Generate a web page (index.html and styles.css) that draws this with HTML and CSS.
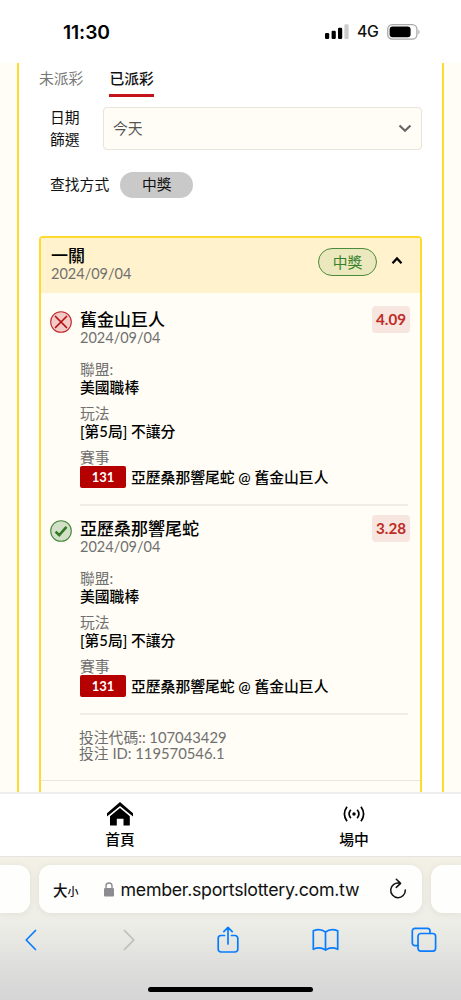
FILE: index.html
```html
<!DOCTYPE html>
<html lang="zh-Hant">
<head>
<meta charset="utf-8">
<title>已派彩</title>
<link rel="stylesheet" href="styles.css">
</head>
<body>
<div class="screen">
  <header class="status">
    <span class="time">11:30</span>
    <div class="indicators">
      <svg width="25" height="16" viewBox="0 0 25 16"><rect x="0" y="9" width="4.2" height="6" rx="1.2"/><rect x="6.6" y="6.7" width="4.2" height="8.3" rx="1.2"/><rect x="13" y="3.7" width="4.2" height="11.3" rx="1.2"/><rect x="19.4" y="0.3" width="4.2" height="14.7" rx="1.2" fill="#ccc"/></svg>
      <span class="network">4G</span>
      <svg width="34" height="16" viewBox="0 0 34 16"><rect x=".7" y=".7" width="29.2" height="14.4" rx="4.6" fill="none" stroke="#a9a9a9" stroke-width="1.3"/><rect x="2.6" y="2.6" width="21" height="10.6" rx="3"/><path d="M31.4 5.4q2.4 2.5 0 5z" fill="#a9a9a9"/></svg>
    </div>
  </header>

  <main class="page">
    <div class="column">
      <nav class="tabs">
        <span class="tab">未派彩</span>
        <span class="tab tab-active">已派彩</span>
      </nav>
      <div class="date-filter">
        <span class="date-label">日期<br>篩選</span>
        <div class="select"><span>今天</span><svg width="14" height="9" viewBox="0 0 14 9"><path d="M1.5 1.5 7 6.7l5.500-5.200" fill="none" stroke="#666" stroke-width="2.200"/></svg></div>
      </div>
      <div class="search-row"><span>查找方式</span><span class="chip">中獎</span></div>

      <section class="card">
        <header class="card-head">
          <div><div class="title">一關</div><div class="date">2024/09/04</div></div>
          <span class="win">中獎</span>
          <svg class="caret" width="12" height="9" viewBox="0 0 12 9"><path d="M1.500 7.200 6 2.400l4.500 4.800" fill="none" stroke="#000" stroke-width="2.300"/></svg>
        </header>

        <article class="leg">
          <svg class="mark" width="22" height="22" viewBox="0 0 22 22"><circle cx="11" cy="11" r="10.300" fill="#f2cbc6" stroke="#c1272d" stroke-width="1.100"/><path d="m5.500 5.500 11 11m0-11-11 11" stroke="#b80d12" stroke-width="1.700" stroke-linecap="round"/></svg>
          <div class="leg-body">
            <div class="leg-head">
              <div><div class="title">舊金山巨人</div><div class="date">2024/09/04</div></div>
              <span class="odds">4.09</span>
            </div>
            <dl class="facts">
              <dt>聯盟:</dt><dd>美國職棒</dd>
              <dt>玩法</dt><dd>[第5局] 不讓分</dd>
              <dt>賽事</dt><dd class="match"><span class="code">131</span>亞歷桑那響尾蛇 @ 舊金山巨人</dd>
            </dl>
          </div>
        </article>

        <article class="leg">
          <svg class="mark" width="22" height="22" viewBox="0 0 22 22"><circle cx="11" cy="11" r="10.300" fill="#d3e0c8" stroke="#46873b" stroke-width="1.100"/><path d="m5.600 11.600 3.600 3.500 7.300-8.200" fill="none" stroke="#2f7723" stroke-width="2.500"/></svg>
          <div class="leg-body">
            <div class="leg-head">
              <div><div class="title">亞歷桑那響尾蛇</div><div class="date">2024/09/04</div></div>
              <span class="odds">3.28</span>
            </div>
            <dl class="facts">
              <dt>聯盟:</dt><dd>美國職棒</dd>
              <dt>玩法</dt><dd>[第5局] 不讓分</dd>
              <dt>賽事</dt><dd class="match"><span class="code">131</span>亞歷桑那響尾蛇 @ 舊金山巨人</dd>
            </dl>
          </div>
        </article>

        <footer class="ticket">投注代碼:: 107043429<br>投注 ID: 119570546.1</footer>
      </section>
    </div>
  </main>

  <nav class="site-nav">
    <div class="nav-item nav-home">
      <svg width="28" height="26" viewBox="0 0 28 26"><path d="M1 12.200 14 1l13 11.200v3.300L14 4.900 1 15.500z"/><path d="M4 15.200 14 7l9.800 8.200v9.200h-6.300v-6.700h-6.700v6.700H4z"/></svg>
      <span>首頁</span>
    </div>
    <div class="nav-item nav-live">
      <svg width="22" height="26" viewBox="0 0 22 26"><circle cx="11" cy="13" r="1.700"/><g fill="none" stroke="#000" stroke-width="1.700"><path d="M7.800 8.800q-3.400 4.200 0 8.400M14.200 8.800q3.400 4.200 0 8.400M4 5.700q-5.200 7.300 0 14.600M18 5.700q5.200 7.300 0 14.600"/></g></svg>
      <span>場中</span>
    </div>
  </nav>

  <footer class="browser">
    <div class="address-row">
      <div class="peek peek-left"></div>
      <div class="address">
        <span class="big">大</span><span class="small">小</span>
        <svg class="lock" width="10" height="15" viewBox="0 0 10 15"><rect y="6" width="10" height="8.500" rx="1.300" fill="#8b8b90"/><path d="M2 7V4a3 3 0 0 1 6 0v3" fill="none" stroke="#8b8b90" stroke-width="1.400"/></svg>
        <span class="url">member.sportslottery.com.tw</span>
        <svg class="reload" width="18" height="22" viewBox="0 0 18 22"><path d="M10.500 5.200A7.300 7.300 0 1 0 16.300 12M7.300 1.200l4.300 4.200-4.300 4" fill="none" stroke="#111" stroke-width="1.500" stroke-linecap="round" stroke-linejoin="round"/></svg>
      </div>
      <div class="peek peek-right"></div>
    </div>
    <div class="toolbar">
      <svg width="12" height="22" viewBox="0 0 12 22"><path d="M10.500 1.500 1.200 11l9.300 9.500"/></svg>
      <svg class="disabled" width="12" height="22" viewBox="0 0 12 22"><path d="m1.500 1.500 9.300 9.500-9.300 9.500"/></svg>
      <svg width="22" height="28" viewBox="0 0 22 28"><path d="M7.500 9.500H4A2.800 2.800 0 0 0 1.200 12.300v10.900A2.800 2.800 0 0 0 4 26h14a2.800 2.800 0 0 0 2.800-2.800V12.300A2.800 2.800 0 0 0 18 9.500h-3.500M11 18V1.400M6.800 5.600 11 1.400l4.200 4.200"/></svg>
      <svg width="27" height="24" viewBox="0 0 27 24"><path d="M13.500 4Q8-.2 1.300 2.800v18.500q6.700-3 12.200.8 5.500-3.800 12.200-.8V2.800Q19-.2 13.500 4zv18"/></svg>
      <svg width="26" height="26" viewBox="0 0 26 26"><path d="M7 18.700H4a2.700 2.700 0 0 1-2.700-2.700V4A2.700 2.700 0 0 1 4 1.300h12.400A2.700 2.700 0 0 1 19 4v2.500"/><rect x="7" y="6.500" width="17.600" height="17.600" rx="2.800"/></svg>
    </div>
    <div class="home-bar"></div>
  </footer>
</div>
</body>
</html>
```
FILE: styles.css
```css
* { box-sizing: border-box; }
body { margin: 0; font-family: Lato, "Noto Sans CJK TC", sans-serif; font-size: 14.8px; color: #111; background: #fff; }
svg { display: block; flex: none; }
.screen { width: 461px; height: 1000px; display: flex; flex-direction: column; overflow: hidden; }

.status { height: 63px; flex: none; display: flex; justify-content: space-between; padding: 20px 40px 0 63px; font-family: Inter, sans-serif; }
.time { font-size: 19.300px; line-height: 24px; font-weight: 600; letter-spacing: -.1px; color: #000; }
.indicators { display: flex; align-items: center; height: 24px; }
.network { font-size: 15.800px; font-weight: 500; margin: 0 8px 0 7px; width: 22px; letter-spacing: -.4px; line-height: 24px; }

.page { height: 729px; flex: none; overflow: hidden; background: #fffdf5; padding: 0 17px; }
.column { height: 729px; overflow: hidden; background: #fff; border: solid #ffdb2d; border-width: 0 2px; padding: 0 20px; }
.tabs { display: flex; gap: 26px; height: 44px; }
.tab { height: 34px; line-height: 31px; color: #777; }
.tab-active { color: #111; font-weight: 500; border-bottom: 3px solid #c4141b; }
.date-filter { display: flex; height: 43px; padding-left: 11px; }
.date-label { width: 53px; line-height: 21.500px; }
.select { flex: 1; display: flex; align-items: center; justify-content: space-between; border: 1px solid #e8e4da; border-radius: 4px; background: #fffdf5; padding: 0 9px 0 10px; color: #555; }
.select span { margin-left: -1px; line-height: 20px; padding-bottom: 2px; }
.search-row { display: flex; align-items: center; gap: 11px; margin: 21px 0 0 11px; height: 27px; }
.search-row > span:first-child { line-height: 20px; padding-bottom: 2px; }
.chip { width: 73px; height: 26px; line-height: 25px; text-align: center; border-radius: 13px; background: #c9c9c9; }

.card { height: 600px; margin-top: 38px; border: 2px solid #ffd92b; border-radius: 4px; background: #fffdf5; }
.card-head { height: 55px; display: flex; background: #fff2cc; padding: 8px 17px 0 10px; }
.card-head > div { flex: 1; }
.title { font-size: 17px; line-height: 19px; height: 20px; font-weight: 500; color: #000; white-space: nowrap; }
.date { font-size: 14.500px; line-height: 15px; color: #707070; }
.win { width: 59px; height: 28px; margin-top: 2px; border: 1.300px solid #4a8b3c; border-radius: 14px; background: #ebe8bd; color: #38822b; text-align: center; line-height: 26px; }
.caret { margin: 10px 0 0 14px; }
.leg { height: 209px; display: flex; padding: 17px 12px 0 9px; }
.mark { margin-top: 1px; }
.leg-body { flex: 1; margin-left: 8px; height: 196px; border-bottom: 2px solid #efede7; }
.leg-head { display: flex; justify-content: space-between; height: 50px; }
.odds { width: 38px; height: 27px; margin: -4px -2px 0 0; line-height: 27px; border-radius: 4px; background: #f7e5df; color: #bd2c25; font-weight: 700; font-size: 15.200px; text-align: center; }
.facts { margin: 0; }
.facts dt { height: 18px; line-height: 18px; color: #707070; }
.facts dd { margin: 0 0 8px; height: 18px; line-height: 18px; font-weight: 500; color: #000; white-space: nowrap; }
.facts .match { display: flex; align-items: center; gap: 5px; height: 22px; }
.code { width: 46px; height: 22px; line-height: 22px; border-radius: 2px; background: #b60000; color: #fff; font-weight: 700; font-size: 13px; text-align: center; }
.ticket { height: 70px; padding: 18px 0 0 38px; line-height: 16px; color: #707070; border-bottom: 1px solid #e8e5e1; }

.site-nav { height: 64px; flex: none; background: #fff; border-top: 2px solid #eee; display: grid; grid-template-columns: 240px 228px; font-weight: 500; color: #000; }
.nav-item { display: flex; flex-direction: column; align-items: center; padding-top: 7px; line-height: 24px; }

.browser { height: 144px; flex: none; overflow: hidden; background: linear-gradient(#f3f0e5, #eeeee8 45%, #dcdcdb 80%, #d5d5d5); border-top: 1px solid #e4e4e0; font-family: Inter, "Noto Sans CJK TC", sans-serif; }
.address-row { display: flex; gap: 9px; padding-top: 8px; height: 56px; }
.address, .peek { height: 48px; background: #fefefc; box-shadow: 0 1px 7px rgba(90, 80, 50, .09); }
.peek { width: 30px; }
.peek-left { border-radius: 0 12px 12px 0; }
.peek-right { border-radius: 12px 0 0 12px; }
.address { width: 383px; border-radius: 12px; display: flex; align-items: center; padding: 0 15px 0 14px; }
.big { font-size: 14.500px; font-weight: 500; }
.small { font-size: 11px; font-weight: 500; margin-top: 3px; }
.lock { margin: 0 7px 0 25px; }
.url { font-size: 17.800px; white-space: nowrap; letter-spacing: -.28px; width: 239px; }
.reload { margin-left: auto; }
.toolbar { display: grid; grid-template-columns: repeat(5, 98.250px); align-items: center; justify-items: center; height: 54px; margin-left: -18px; }
.toolbar svg { fill: none; stroke: #087cff; stroke-width: 1.700; stroke-linecap: round; stroke-linejoin: round; }
.toolbar .disabled { stroke: #bdbdbd; }
.home-bar { width: 165px; height: 5px; border-radius: 3px; background: #000; margin: 20px auto 0; }
```
